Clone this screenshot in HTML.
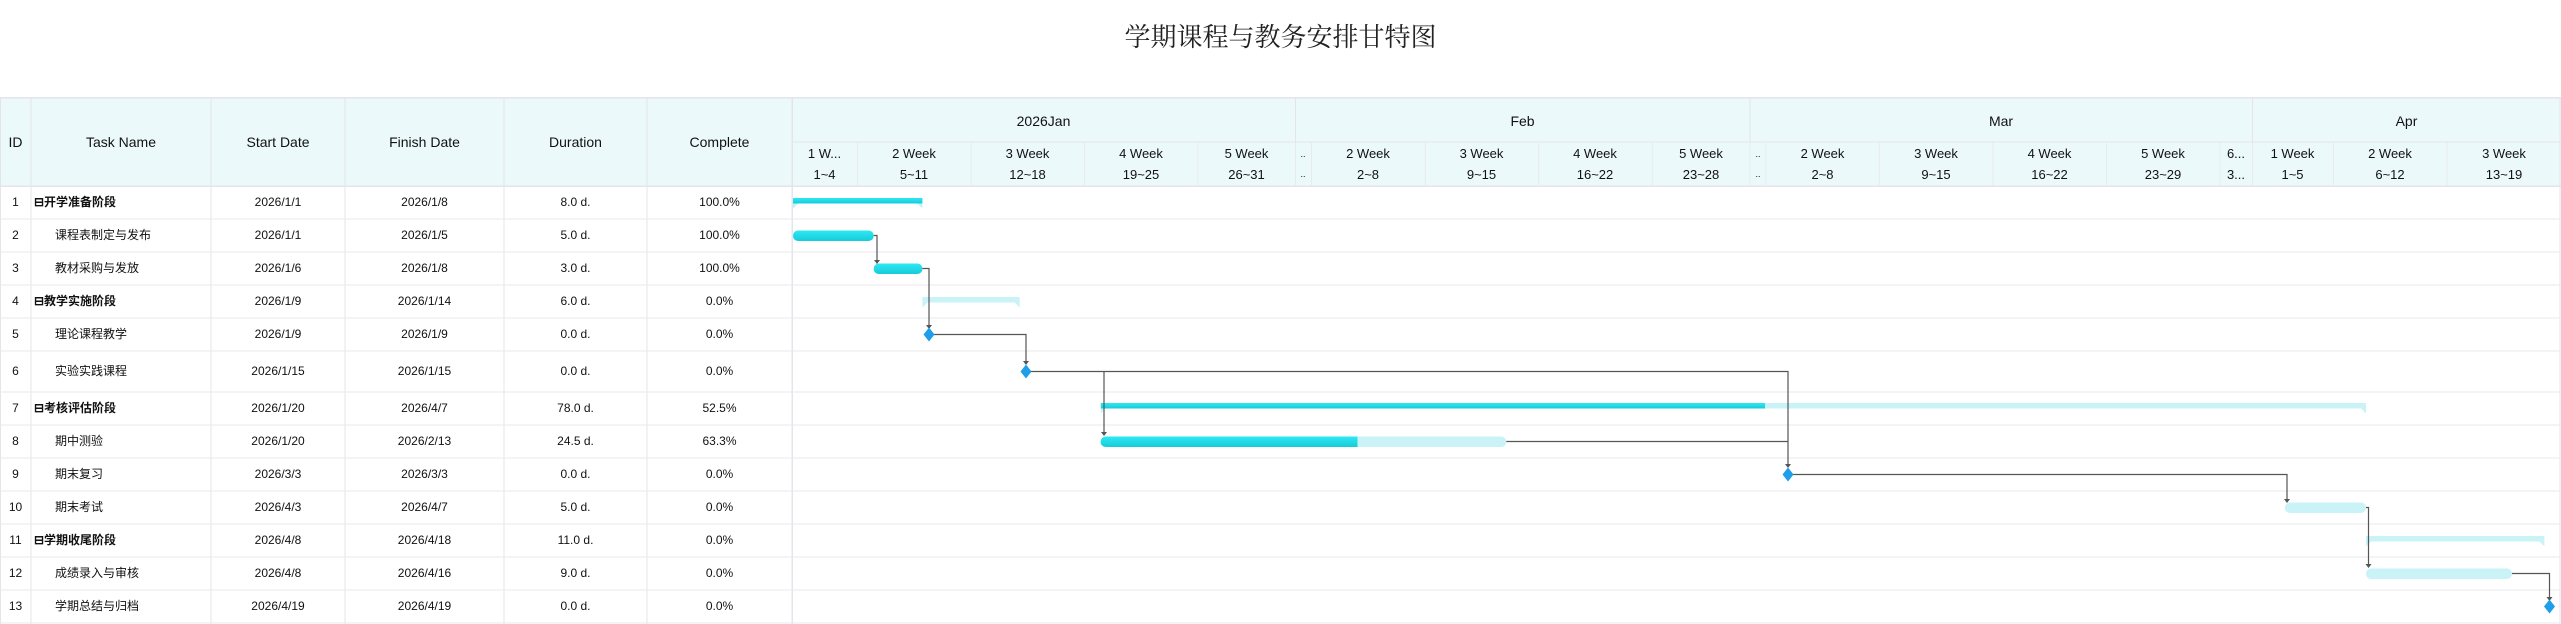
<!DOCTYPE html>
<html><head><meta charset="utf-8"><style>
*{margin:0;padding:0;box-sizing:border-box}
body{width:2561px;height:624px;background:#fff;position:relative;overflow:hidden;font-family:"Liberation Sans","Noto Sans CJK SC",sans-serif;color:#111}
.a{position:absolute}
.t{position:absolute;white-space:nowrap}
.c{text-align:center}
.title{left:0;width:2561px;top:18px;text-align:center;font-family:"Noto Serif CJK SC","Liberation Serif",serif;font-size:26px;color:#222;line-height:36px}
.hdr{background:#ecf9fb}
.cell{position:absolute;font-size:12px;text-align:center;line-height:14px}
.nm{position:absolute;white-space:nowrap;font-size:12px;line-height:14px;height:14px}
.hd{font-size:14px}
.wk{font-size:13px;text-align:center;line-height:14px}
</style></head><body>
<div class="t title">学期课程与教务安排甘特图</div>
<div class="a hdr" style="left:0;top:98px;width:2561px;height:88px"></div>
<svg class="a" style="left:0;top:0" width="2561" height="624">
<g fill="#e3e5ea">
<rect x="0" y="97" width="2561" height="1.5"/>
<rect x="0" y="185.5" width="2561" height="1.5"/>
<rect x="792" y="141.5" width="1769" height="1"/>
<rect x="0" y="98" width="1" height="526"/>
<rect x="30.5" y="98" width="1" height="526"/>
<rect x="210.5" y="98" width="1" height="526"/>
<rect x="344.5" y="98" width="1" height="526"/>
<rect x="503.5" y="98" width="1" height="526"/>
<rect x="646.5" y="98" width="1" height="526"/>
<rect x="791.5" y="98" width="1.5" height="526"/>
<rect x="1295" y="98" width="1" height="44"/>
<rect x="1749.5" y="98" width="1" height="44"/>
<rect x="2252" y="98" width="1" height="44"/>
<rect x="2559.5" y="98" width="1" height="526"/>
</g>
<g fill="#e8eaee">
<rect x="857" y="142" width="1" height="44"/><rect x="970.5" y="142" width="1" height="44"/><rect x="1084" y="142" width="1" height="44"/><rect x="1197.5" y="142" width="1" height="44"/><rect x="1295" y="142" width="1" height="44"/><rect x="1311" y="142" width="1" height="44"/><rect x="1424.7" y="142" width="1" height="44"/><rect x="1538.2" y="142" width="1" height="44"/><rect x="1651.8" y="142" width="1" height="44"/><rect x="1749.5" y="142" width="1" height="44"/><rect x="1765.3" y="142" width="1" height="44"/><rect x="1878.8" y="142" width="1" height="44"/><rect x="1992.4" y="142" width="1" height="44"/><rect x="2105.9" y="142" width="1" height="44"/><rect x="2219.5" y="142" width="1" height="44"/><rect x="2252" y="142" width="1" height="44"/><rect x="2333" y="142" width="1" height="44"/><rect x="2446.5" y="142" width="1" height="44"/>
</g>
<g fill="#e8e9ef">
<rect x="0" y="218.5" width="2561" height="1"/><rect x="0" y="251.5" width="2561" height="1"/><rect x="0" y="284.5" width="2561" height="1"/><rect x="0" y="317.5" width="2561" height="1"/><rect x="0" y="350.5" width="2561" height="1"/><rect x="0" y="391.5" width="2561" height="1"/><rect x="0" y="424.5" width="2561" height="1"/><rect x="0" y="457.5" width="2561" height="1"/><rect x="0" y="490.5" width="2561" height="1"/><rect x="0" y="523.5" width="2561" height="1"/><rect x="0" y="556.5" width="2561" height="1"/><rect x="0" y="589.5" width="2561" height="1"/><rect x="0" y="622.5" width="2561" height="1"/>
</g>
<defs><linearGradient id="g" x1="0" y1="0" x2="0" y2="1"><stop offset="0" stop-color="#2ee8f2"/><stop offset="1" stop-color="#17cbd9"/></linearGradient></defs>
<g>
<rect x="793" y="198" width="129.4" height="5.5" fill="url(#g)"/><path d="M793 203.5h5l-5 5zM922.4 203.5h-5l5 5z" fill="#bff3f6"/>
<rect x="922.4" y="297" width="97.3" height="5.5" fill="#c9f3f6"/><path d="M922.4 302.5h5l-5 5zM1019.7 302.5h-5l5 5z" fill="#c9f3f6"/>
<rect x="1100.8" y="403" width="1265.2" height="5.5" fill="#c9f3f6"/><rect x="1100.8" y="403" width="664.2" height="5.5" fill="url(#g)"/><path d="M1100.8 408.5h5l-5 5zM2366 408.5h-5l5 5z" fill="#c9f3f6"/>
<rect x="2366" y="536" width="178.4" height="5.5" fill="#c9f3f6"/><path d="M2366 541.5h5l-5 5zM2544.4 541.5h-5l5 5z" fill="#c9f3f6"/>
</g>
<rect x="793" y="230.5" width="80.7" height="10.5" rx="5" fill="url(#g)"/>
<rect x="873.7" y="263.5" width="48.7" height="10.5" rx="5" fill="url(#g)"/>
<rect x="1100.8" y="436.5" width="405.5" height="10.5" rx="5" fill="#c9f3f6"/>
<path d="M1105.8 436.5h251.7v10.5h-251.7a5 5 0 0 1 0-10.5z" fill="url(#g)"/>
<rect x="2284.8" y="502.5" width="81.2" height="10.5" rx="5" fill="#c9f3f6"/>
<rect x="2366" y="568.5" width="146" height="10.5" rx="5" fill="#c9f3f6"/>
<g fill="none" stroke="#555" stroke-width="1.2">
<path d="M873.7 235.5h3.3v26"/>
<path d="M922.4 268.5h6.6v59"/>
<path d="M929 334.5h97v29"/>
<path d="M1026 371.5h762v95"/>
<path d="M1104 371.5v63"/>
<path d="M1506.3 441.5h281.7"/>
<path d="M1788 474.5h499v26"/>
<path d="M2366 507.5h2.5v59"/>
<path d="M2512 573.5h37.5v25"/>
</g>
<g fill="#555">
<path d="M874 260h6l-3 4z"/><path d="M926 325h6l-3 4z"/><path d="M1023 361h6l-3 4z"/><path d="M1101 432h6l-3 4z"/><path d="M1785 464h6l-3 4z"/><path d="M2284 499h6l-3 4z"/><path d="M2365.5 564h6l-3 4z"/><path d="M2546.5 597h6l-3 4z"/>
</g>
<g fill="#1f9fea">
<path d="M929 327.5l5.5 7-5.5 7-5.5-7z"/>
<path d="M1026 364.5l5.5 7-5.5 7-5.5-7z"/>
<path d="M1788 467.5l5.5 7-5.5 7-5.5-7z"/>
<path d="M2549.5 599.5l5.5 7-5.5 7-5.5-7z"/>
</g>
</svg>
<div class="t hd" style="left:0;width:31px;top:134px;text-align:center">ID</div>
<div class="t hd c" style="left:31px;width:180px;top:134px">Task Name</div>
<div class="t hd c" style="left:211px;width:134px;top:134px">Start Date</div>
<div class="t hd c" style="left:345px;width:159px;top:134px">Finish Date</div>
<div class="t hd c" style="left:504px;width:143px;top:134px">Duration</div>
<div class="t hd c" style="left:647px;width:145px;top:134px">Complete</div>
<div class="t hd c" style="left:792px;width:503px;top:113px">2026Jan</div>
<div class="t hd c" style="left:1295px;width:455px;top:113px">Feb</div>
<div class="t hd c" style="left:1750px;width:502px;top:113px">Mar</div>
<div class="t hd c" style="left:2252px;width:309px;top:113px">Apr</div>
<div class="t wk" style="left:792px;width:65px;top:147px">1 W...<br><span style="line-height:27px">1~4</span></div>
<div class="t wk" style="left:857px;width:114px;top:147px">2 Week<br><span style="line-height:27px">5~11</span></div>
<div class="t wk" style="left:971px;width:113px;top:147px">3 Week<br><span style="line-height:27px">12~18</span></div>
<div class="t wk" style="left:1084px;width:114px;top:147px">4 Week<br><span style="line-height:27px">19~25</span></div>
<div class="t wk" style="left:1198px;width:97px;top:147px">5 Week<br><span style="line-height:27px">26~31</span></div>
<div class="t wk" style="left:1295px;width:16px;top:147px;font-size:9px">..<br><span style="line-height:27px">..</span></div>
<div class="t wk" style="left:1311px;width:114px;top:147px">2 Week<br><span style="line-height:27px">2~8</span></div>
<div class="t wk" style="left:1425px;width:113px;top:147px">3 Week<br><span style="line-height:27px">9~15</span></div>
<div class="t wk" style="left:1538px;width:114px;top:147px">4 Week<br><span style="line-height:27px">16~22</span></div>
<div class="t wk" style="left:1652px;width:98px;top:147px">5 Week<br><span style="line-height:27px">23~28</span></div>
<div class="t wk" style="left:1750px;width:16px;top:147px;font-size:9px">..<br><span style="line-height:27px">..</span></div>
<div class="t wk" style="left:1766px;width:113px;top:147px">2 Week<br><span style="line-height:27px">2~8</span></div>
<div class="t wk" style="left:1879px;width:114px;top:147px">3 Week<br><span style="line-height:27px">9~15</span></div>
<div class="t wk" style="left:1993px;width:113px;top:147px">4 Week<br><span style="line-height:27px">16~22</span></div>
<div class="t wk" style="left:2106px;width:114px;top:147px">5 Week<br><span style="line-height:27px">23~29</span></div>
<div class="t wk" style="left:2220px;width:32px;top:147px">6...<br><span style="line-height:27px">3...</span></div>
<div class="t wk" style="left:2252px;width:81px;top:147px">1 Week<br><span style="line-height:27px">1~5</span></div>
<div class="t wk" style="left:2333px;width:114px;top:147px">2 Week<br><span style="line-height:27px">6~12</span></div>
<div class="t wk" style="left:2447px;width:114px;top:147px">3 Week<br><span style="line-height:27px">13~19</span></div>
<div style="position:absolute;left:0;top:0;font-size:12px">
<div class="cell" style="left:0;width:31px;top:195px">1</div><div class="nm" style="left:34px;top:195px;font-weight:bold">⊟开学准备阶段</div><div class="cell" style="left:211px;width:134px;top:195px">2026/1/1</div><div class="cell" style="left:345px;width:159px;top:195px">2026/1/8</div><div class="cell" style="left:504px;width:143px;top:195px">8.0 d.</div><div class="cell" style="left:647px;width:145px;top:195px">100.0%</div>
<div class="cell" style="left:0;width:31px;top:228px">2</div><div class="nm" style="left:55px;top:228px">课程表制定与发布</div><div class="cell" style="left:211px;width:134px;top:228px">2026/1/1</div><div class="cell" style="left:345px;width:159px;top:228px">2026/1/5</div><div class="cell" style="left:504px;width:143px;top:228px">5.0 d.</div><div class="cell" style="left:647px;width:145px;top:228px">100.0%</div>
<div class="cell" style="left:0;width:31px;top:261px">3</div><div class="nm" style="left:55px;top:261px">教材采购与发放</div><div class="cell" style="left:211px;width:134px;top:261px">2026/1/6</div><div class="cell" style="left:345px;width:159px;top:261px">2026/1/8</div><div class="cell" style="left:504px;width:143px;top:261px">3.0 d.</div><div class="cell" style="left:647px;width:145px;top:261px">100.0%</div>
<div class="cell" style="left:0;width:31px;top:294px">4</div><div class="nm" style="left:34px;top:294px;font-weight:bold">⊟教学实施阶段</div><div class="cell" style="left:211px;width:134px;top:294px">2026/1/9</div><div class="cell" style="left:345px;width:159px;top:294px">2026/1/14</div><div class="cell" style="left:504px;width:143px;top:294px">6.0 d.</div><div class="cell" style="left:647px;width:145px;top:294px">0.0%</div>
<div class="cell" style="left:0;width:31px;top:327px">5</div><div class="nm" style="left:55px;top:327px">理论课程教学</div><div class="cell" style="left:211px;width:134px;top:327px">2026/1/9</div><div class="cell" style="left:345px;width:159px;top:327px">2026/1/9</div><div class="cell" style="left:504px;width:143px;top:327px">0.0 d.</div><div class="cell" style="left:647px;width:145px;top:327px">0.0%</div>
<div class="cell" style="left:0;width:31px;top:364px">6</div><div class="nm" style="left:55px;top:364px">实验实践课程</div><div class="cell" style="left:211px;width:134px;top:364px">2026/1/15</div><div class="cell" style="left:345px;width:159px;top:364px">2026/1/15</div><div class="cell" style="left:504px;width:143px;top:364px">0.0 d.</div><div class="cell" style="left:647px;width:145px;top:364px">0.0%</div>
<div class="cell" style="left:0;width:31px;top:401px">7</div><div class="nm" style="left:34px;top:401px;font-weight:bold">⊟考核评估阶段</div><div class="cell" style="left:211px;width:134px;top:401px">2026/1/20</div><div class="cell" style="left:345px;width:159px;top:401px">2026/4/7</div><div class="cell" style="left:504px;width:143px;top:401px">78.0 d.</div><div class="cell" style="left:647px;width:145px;top:401px">52.5%</div>
<div class="cell" style="left:0;width:31px;top:434px">8</div><div class="nm" style="left:55px;top:434px">期中测验</div><div class="cell" style="left:211px;width:134px;top:434px">2026/1/20</div><div class="cell" style="left:345px;width:159px;top:434px">2026/2/13</div><div class="cell" style="left:504px;width:143px;top:434px">24.5 d.</div><div class="cell" style="left:647px;width:145px;top:434px">63.3%</div>
<div class="cell" style="left:0;width:31px;top:467px">9</div><div class="nm" style="left:55px;top:467px">期末复习</div><div class="cell" style="left:211px;width:134px;top:467px">2026/3/3</div><div class="cell" style="left:345px;width:159px;top:467px">2026/3/3</div><div class="cell" style="left:504px;width:143px;top:467px">0.0 d.</div><div class="cell" style="left:647px;width:145px;top:467px">0.0%</div>
<div class="cell" style="left:0;width:31px;top:500px">10</div><div class="nm" style="left:55px;top:500px">期末考试</div><div class="cell" style="left:211px;width:134px;top:500px">2026/4/3</div><div class="cell" style="left:345px;width:159px;top:500px">2026/4/7</div><div class="cell" style="left:504px;width:143px;top:500px">5.0 d.</div><div class="cell" style="left:647px;width:145px;top:500px">0.0%</div>
<div class="cell" style="left:0;width:31px;top:533px">11</div><div class="nm" style="left:34px;top:533px;font-weight:bold">⊟学期收尾阶段</div><div class="cell" style="left:211px;width:134px;top:533px">2026/4/8</div><div class="cell" style="left:345px;width:159px;top:533px">2026/4/18</div><div class="cell" style="left:504px;width:143px;top:533px">11.0 d.</div><div class="cell" style="left:647px;width:145px;top:533px">0.0%</div>
<div class="cell" style="left:0;width:31px;top:566px">12</div><div class="nm" style="left:55px;top:566px">成绩录入与审核</div><div class="cell" style="left:211px;width:134px;top:566px">2026/4/8</div><div class="cell" style="left:345px;width:159px;top:566px">2026/4/16</div><div class="cell" style="left:504px;width:143px;top:566px">9.0 d.</div><div class="cell" style="left:647px;width:145px;top:566px">0.0%</div>
<div class="cell" style="left:0;width:31px;top:599px">13</div><div class="nm" style="left:55px;top:599px">学期总结与归档</div><div class="cell" style="left:211px;width:134px;top:599px">2026/4/19</div><div class="cell" style="left:345px;width:159px;top:599px">2026/4/19</div><div class="cell" style="left:504px;width:143px;top:599px">0.0 d.</div><div class="cell" style="left:647px;width:145px;top:599px">0.0%</div>
</div>
</body></html>
